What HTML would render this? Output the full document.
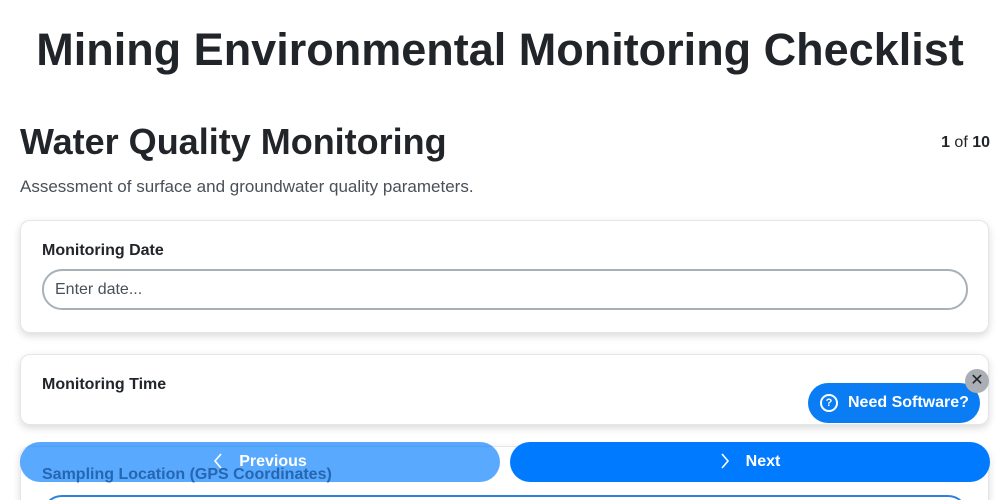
<!DOCTYPE html>
<html style="overflow:hidden;height:500px"><head><style>
body{margin:0;width:1000px;height:500px;overflow:hidden;background:#fff;font-family:"Liberation Sans",sans-serif;color:#212529;position:relative}
h1{position:absolute;top:24px;left:0;width:1000px;text-align:center;margin:0;font-size:45px;font-weight:bold;line-height:52px}
h2{position:absolute;left:20px;top:121px;margin:0;font-size:36px;line-height:42px;font-weight:bold}
.cnt{position:absolute;right:10px;top:134px;font-size:16px}
.desc{position:absolute;left:20px;top:177px;font-size:17px;color:#495057}
.card{position:absolute;left:20px;width:967px;background:#fff;border:1px solid #e4e6ea;border-radius:10px;box-shadow:0 3px 8px rgba(0,0,0,.15)}
.lbl{position:absolute;left:21px;font-size:16px;font-weight:bold}
.inp{position:absolute;left:21px;height:37px;border:2px solid #a8b0b8;border-radius:20px;font-size:16px;color:#495057;line-height:37px;padding-left:11px;box-sizing:content-box}
.btn{position:absolute;top:442px;height:40px;width:480px;border-radius:20px;color:#fff;font-weight:bold;font-size:16px;line-height:40px;text-align:center}
.btn svg{vertical-align:-3px;margin-right:16px}
</style></head><body>
<h1>Mining Environmental Monitoring Checklist</h1>
<h2>Water Quality Monitoring</h2>
<div class="cnt"><b>1</b> of <b>10</b></div>
<div class="desc">Assessment of surface and groundwater quality parameters.</div>
<div class="card" style="top:220px;height:111px"><div class="lbl" style="top:21px">Monitoring Date</div><div class="inp" style="top:48px;width:911px">Enter date...</div></div>
<div class="card" style="top:354px;height:69px"><div class="lbl" style="top:21px">Monitoring Time</div></div>
<div class="card" style="top:446px;height:54px;overflow:hidden;border-bottom:none;border-radius:10px 10px 0 0"><div class="inp" style="top:48px;width:911px;border-color:#2f7fe0"></div></div>
<div class="btn" style="left:20px;background:rgba(0,123,255,.65)"><svg width="10" height="16" viewBox="0 0 10 16"><path d="M8 1L2 8l6 7" stroke="#fff" stroke-width="1.6" fill="none"/></svg>Previous</div>
<div style="position:absolute;left:42px;top:466px;font-size:16px;font-weight:bold;color:rgba(20,80,150,.75)">Sampling Location (GPS Coordinates)</div>
<div class="btn" style="left:510px;background:#007bff"><svg width="10" height="16" viewBox="0 0 10 16"><path d="M2 1l6 7-6 7" stroke="#fff" stroke-width="1.6" fill="none"/></svg>Next</div>
<div style="position:absolute;left:808px;top:383px;width:172px;height:40px;border-radius:20px;background:#0a7cf4;color:#fff;font-weight:bold;font-size:16px;line-height:40px">
<span style="position:absolute;left:12px;top:11px;width:14px;height:14px;border:2px solid #fff;border-radius:50%;font-size:11px;line-height:14px;text-align:center">?</span>
<span style="position:absolute;left:40px">Need Software?</span></div>
<div style="position:absolute;left:965px;top:369px;width:24px;height:24px;border-radius:50%;background:#a9afb5;color:#222;font-size:16px;line-height:24px;text-align:center">&#x2715;</div>
</body></html>
